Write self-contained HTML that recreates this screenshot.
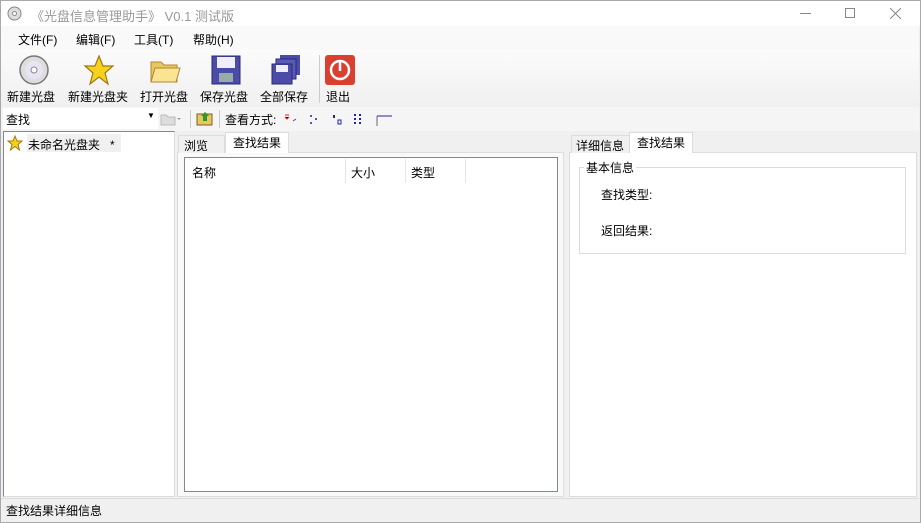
<!DOCTYPE html>
<html><head><meta charset="utf-8"><style>
*{margin:0;padding:0;box-sizing:border-box}
body{width:921px;height:523px;overflow:hidden;background:#f0f0f0;font-family:"Liberation Sans","Noto Sans CJK SC",sans-serif;font-size:12px;color:#000;position:relative}
.abs{position:absolute}
.title{left:0;top:0;width:921px;height:26px;background:#fff;border:1px solid #aaa;border-bottom:none}
.menu{left:1px;top:26px;width:918px;height:24px;background:#f9f9f9}
.menu span{position:absolute;top:5px}
.tb{left:1px;top:50px;width:918px;height:57px;background:linear-gradient(#fbfbfb,#f0f0f0)}
.btn{position:absolute;top:4px;text-align:center}
.btn .lbl{position:absolute;top:34px;left:0;white-space:nowrap}
.sb{left:1px;top:107px;width:918px;height:24px;background:#f5f5f5}
.panel{background:#fff}
</style></head><body>
<div class="abs title">
 <svg class="abs" style="left:6px;top:5px" width="15" height="15"><circle cx="7.5" cy="7.5" r="6.5" fill="#ddd" stroke="#888"/><circle cx="7.5" cy="7.5" r="2" fill="#fff" stroke="#888"/></svg>
 <span class="abs" style="left:30px;top:5px;color:#999;font-size:13px">《光盘信息管理助手》 V0.1 测试版</span>
 <div class="abs" style="left:799px;top:12px;width:11px;height:1px;background:#888"></div>
 <div class="abs" style="left:844px;top:7px;width:10px;height:10px;border:1px solid #888"></div>
 <svg class="abs" style="left:889px;top:7px" width="11" height="11"><path d="M0 0L11 11M11 0L0 11" stroke="#888"/></svg>
</div>
<div class="abs menu">
 <span style="left:17px">文件(F)</span><span style="left:75px">编辑(F)</span><span style="left:133px">工具(T)</span><span style="left:192px">帮助(H)</span>
</div>
<div class="abs tb">
 <div class="btn" style="left:17px"><svg width="32" height="32"><circle cx="16" cy="16" r="14" fill="#ddd" stroke="#777" stroke-width="1.5"/><circle cx="16" cy="16" r="9" fill="#e8e4f4"/><circle cx="16" cy="16" r="3" fill="#fff" stroke="#888"/></svg></div>
 <div class="btn lb" style="left:6px;top:38px;position:absolute">新建光盘</div>
 <div class="btn" style="left:82px"><svg width="32" height="32"><path d="M16 2L20 12L30 12L22 19L25 30L16 23L7 30L10 19L2 12L12 12Z" fill="#f7d21c" stroke="#a07810" stroke-width="1.2"/></svg></div>
 <div class="btn" style="left:67px;top:38px">新建光盘夹</div>
 <div class="btn" style="left:148px"><svg width="32" height="32"><path d="M2 8h10l3 3h13v17H2z" fill="#e8c660" stroke="#b08830"/><path d="M6 14h25l-4 14H2z" fill="#fbe491" stroke="#b08830"/></svg></div>
 <div class="btn" style="left:139px;top:38px">打开光盘</div>
 <div class="btn" style="left:209px"><svg width="32" height="32"><rect x="2" y="2" width="28" height="28" fill="#4b4ca8" stroke="#2a2a70"/><rect x="7" y="3" width="18" height="11" fill="#eef"/><rect x="9" y="19" width="14" height="9" fill="#9aa"/></svg></div>
 <div class="btn" style="left:199px;top:38px">保存光盘</div>
 <div class="btn" style="left:269px"><svg width="32" height="32"><rect x="10" y="1" width="20" height="20" fill="#4b4ca8"/><rect x="6" y="5" width="20" height="20" fill="#5a5ab8" stroke="#2a2a70"/><rect x="2" y="10" width="20" height="20" fill="#4b4ca8" stroke="#2a2a70"/><rect x="6" y="11" width="12" height="7" fill="#eef"/></svg></div>
 <div class="btn" style="left:259px;top:38px">全部保存</div>
 <div class="abs" style="left:318px;top:5px;width:1px;height:48px;background:#ccc"></div>
 <div class="btn" style="left:323px"><svg width="32" height="32"><rect x="1" y="1" width="30" height="30" rx="3" fill="#d94030"/><circle cx="16" cy="16" r="9" fill="none" stroke="#fff" stroke-width="2.5"/><path d="M16 8v9" stroke="#fff" stroke-width="2.5"/></svg></div>
 <div class="btn" style="left:325px;top:38px">退出</div>
</div>
<div class="abs sb">
 <div class="abs" style="left:2px;top:1px;width:155px;height:21px;background:#fff"></div>
 <span class="abs" style="left:5px;top:4px">查找</span>
 <span class="abs" style="left:146px;top:4px;font-size:8px">▼</span>
 <svg class="abs" style="left:159px;top:5px" width="22" height="14"><path d="M1 3h5l2 2h7v8H1z" fill="#ddd" stroke="#bbb"/><path d="M17 6l2 2 2-2z" fill="#999"/></svg>
 <div class="abs" style="left:189px;top:3px;width:1px;height:18px;background:#ccc"></div>
 <svg class="abs" style="left:195px;top:4px" width="17" height="15"><rect x="1" y="3" width="15" height="11" fill="#e8c660" stroke="#806020"/><path d="M7 10V5h-2l4-4 4 4h-2v5z" fill="#2a9a2a"/></svg>
 <div class="abs" style="left:218px;top:3px;width:1px;height:18px;background:#ccc"></div>
 <span class="abs" style="left:224px;top:4px">查看方式:</span>
 <svg class="abs" style="left:282px;top:6px" width="110" height="14"><path d="M2 2h4M2 4l2 2 2-2" stroke="#d22"/><path d="M10 8l3-2" stroke="#c0c"/><circle cx="28" cy="3" r="1" fill="#22a"/><circle cx="33" cy="6" r="1" fill="#22a"/><circle cx="28" cy="10" r="1" fill="#22a"/><rect x="50" y="2" width="2" height="3" fill="#22a"/><rect x="55" y="7" width="3" height="4" fill="none" stroke="#22a"/><g fill="#22a"><rect x="71" y="1" width="2" height="2"/><rect x="76" y="1" width="2" height="2"/><rect x="71" y="5" width="2" height="2"/><rect x="76" y="5" width="2" height="2"/><rect x="71" y="9" width="2" height="2"/><rect x="76" y="9" width="2" height="2"/></g><path d="M94 3h15" stroke="#22a"/><path d="M94 3v10" stroke="#666"/></svg>
</div>
<!-- left panel -->
<div class="abs panel" style="left:3px;top:131px;width:172px;height:366px;border:1px solid #828790;border-right-color:#ddd;border-bottom-color:#ddd"></div>
<svg class="abs" style="left:7px;top:135px" width="16" height="16"><path d="M8 1L10 6L15 6L11 9.5L12.5 15L8 11.5L3.5 15L5 9.5L1 6L6 6Z" fill="#f7d21c" stroke="#a07810"/></svg>
<div class="abs" style="left:27px;top:134px;width:94px;height:18px;background:#f0f0f0"></div>
<span class="abs" style="left:28px;top:136px">未命名光盘夹 &nbsp;&nbsp;*</span>
<!-- middle -->
<div class="abs" style="left:177px;top:152px;width:387px;height:345px;background:#f9f9f9;border:1px solid #ddd"></div>
<div class="abs" style="left:178px;top:135px;width:47px;height:18px;background:#f0f0f0;border:1px solid #ddd;border-bottom:none"></div>
<span class="abs" style="left:184px;top:137px">浏览</span>
<div class="abs" style="left:225px;top:132px;width:64px;height:21px;background:#fff;border:1px solid #ddd;border-bottom:none"></div>
<span class="abs" style="left:233px;top:134px">查找结果</span>
<div class="abs panel" style="left:184px;top:157px;width:374px;height:335px;border:1px solid #828790"></div>
<span class="abs" style="left:192px;top:164px">名称</span>
<div class="abs" style="left:345px;top:159px;width:1px;height:24px;background:#e5e5e5"></div>
<span class="abs" style="left:351px;top:164px">大小</span>
<div class="abs" style="left:405px;top:159px;width:1px;height:24px;background:#e5e5e5"></div>
<span class="abs" style="left:411px;top:164px">类型</span>
<div class="abs" style="left:465px;top:159px;width:1px;height:24px;background:#e5e5e5"></div>
<!-- right -->
<div class="abs panel" style="left:569px;top:152px;width:348px;height:345px;border:1px solid #ddd"></div>
<div class="abs" style="left:571px;top:135px;width:59px;height:18px;background:#f0f0f0;border:1px solid #ddd;border-bottom:none"></div>
<span class="abs" style="left:576px;top:137px">详细信息</span>
<div class="abs" style="left:629px;top:132px;width:64px;height:21px;background:#fff;border:1px solid #ddd;border-bottom:none"></div>
<span class="abs" style="left:637px;top:134px">查找结果</span>
<div class="abs" style="left:579px;top:167px;width:327px;height:87px;border:1px solid #dcdcdc"></div>
<span class="abs" style="left:584px;top:159px;background:#fff;padding:0 2px">基本信息</span>
<span class="abs" style="left:601px;top:186px">查找类型:</span>
<span class="abs" style="left:601px;top:222px">返回结果:</span>
<!-- status -->
<div class="abs" style="left:1px;top:498px;width:918px;height:22px;background:#f0f0f0;border-top:1px solid #ddd"></div>
<span class="abs" style="left:6px;top:502px">查找结果详细信息</span>
<div class="abs" style="left:0;top:0;width:921px;height:523px;border:1px solid #aaa;border-top:none;pointer-events:none"></div>
</body></html>
